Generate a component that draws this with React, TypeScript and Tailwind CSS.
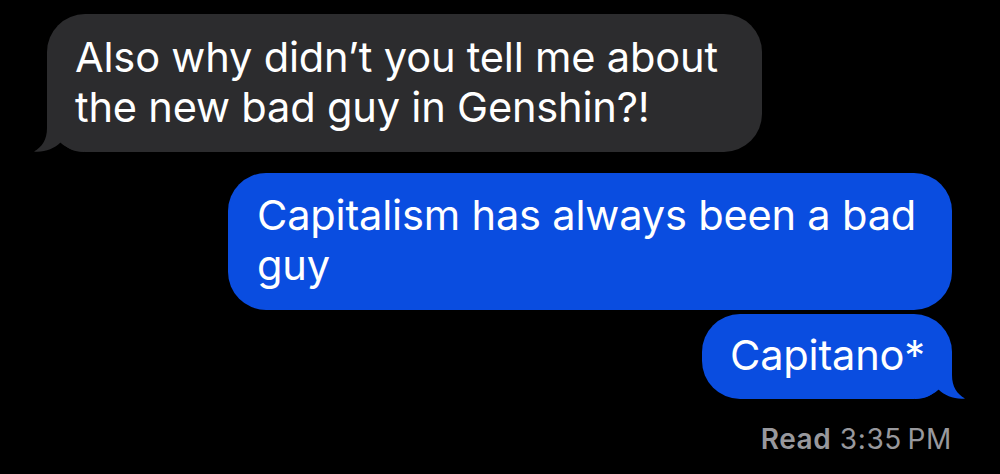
import React from 'react';

// tail drawn at the bottom corner of the last bubble of a run
function Tail({ color, side }: { color: string; side: 'left' | 'right' }) {
    return (
        <svg
            width="50"
            height="40"
            viewBox="0 0 50 40"
            className={`absolute bottom-0 ${side === 'left' ? '-left-[13px]' : '-right-[13px] -scale-x-100'}`}
        >
            <path d="M13,0 L13,16 C13,28 8,35 0,39.5 C10,40.5 20,37 27,30 C32,36 40,40 50,40 L50,0 Z" fill={color} />
        </svg>
    );
}

function Bubble({
    lines,
    side,
    tail,
    className,
}: {
    lines: string[];
    side: 'left' | 'right';
    tail?: boolean;
    className: string;
}) {
    const color = side === 'left' ? '#2c2c2e' : '#0a4de0';
    return (
        <div className={`relative rounded-[38px] ${side === 'left' ? 'bg-[#2c2c2e]' : 'bg-[#0a4de0]'} ${className}`}>
            {tail && <Tail color={color} side={side} />}
            <p className="relative text-[41.6px] leading-[50px] text-white tracking-[-0.2px]">
                {lines.map((l, i) => (
                    <span key={i} className="block whitespace-nowrap">{l}</span>
                ))}
            </p>
        </div>
    );
}

export default function App() {
    return (
        <div className="w-[1000px] h-[474px] bg-black overflow-hidden font-['Inter','Liberation_Sans',sans-serif] flex flex-col">
            <div className="pl-[47px] pt-[14px]">
                <Bubble
                    side="left"
                    tail
                    className="w-[715px] h-[138px] pl-[28px] pt-[18px]"
                    lines={['Also why didn\u2019t you tell me about', 'the new bad guy in Genshin?!']}
                />
            </div>

            <div className="flex flex-col items-end pr-[48px] mt-[21px] gap-[4px]">
                <Bubble
                    side="right"
                    className="w-[724px] h-[137px] pl-[29px] pt-[17px]"
                    lines={['Capitalism has always been a bad', 'guy']}
                />
                <Bubble
                    side="right"
                    tail
                    className="w-[250px] h-[85px] pl-[28px] pt-[16px]"
                    lines={['Capitano*']}
                />
            </div>

            <div className="flex justify-end pr-[48px] mt-[23px]">
                <p className="text-[28px] leading-[34px] tracking-[0.6px] text-[#98989d]">
                    <span className="font-semibold">Read</span> 3:35&#8239;PM
                </p>
            </div>
        </div>
    );
}
